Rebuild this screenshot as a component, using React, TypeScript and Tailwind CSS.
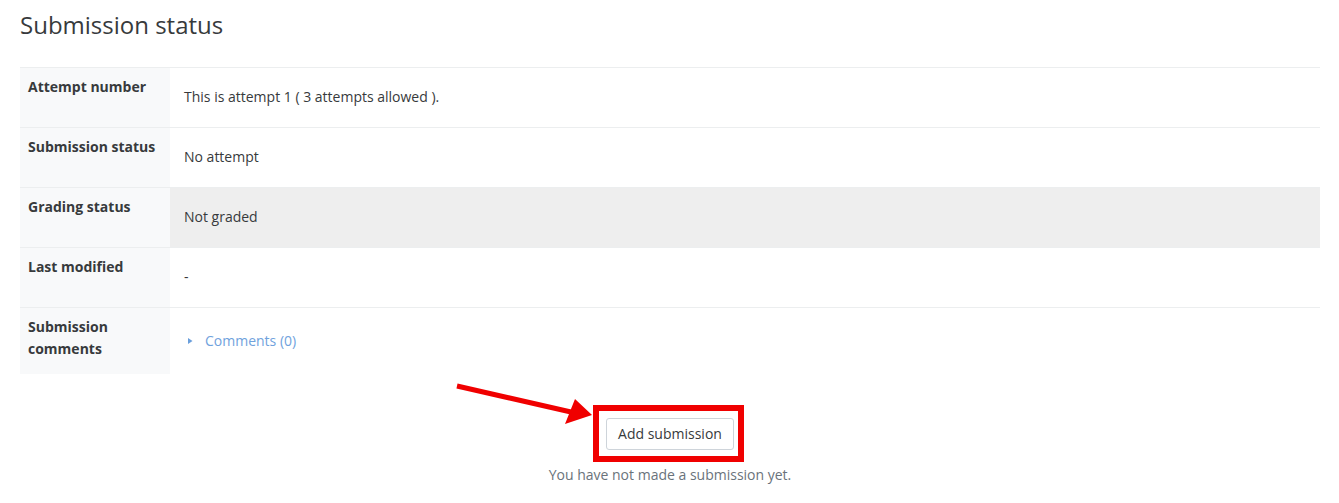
import React from "react";

const rows: { label: React.ReactNode; value: React.ReactNode; shaded?: boolean; tall?: boolean }[] = [
  { label: "Attempt number", value: "This is attempt 1 ( 3 attempts allowed )." },
  { label: "Submission status", value: "No attempt" },
  { label: "Grading status", value: "Not graded", shaded: true },
  { label: "Last modified", value: "-" },
];

export default function App() {
  return (
    <div className="min-h-[503px] bg-white pl-5 pr-[19px] font-['Open_Sans',sans-serif] text-[14px] text-[#373a3c]">
      <h2 className="pt-[10px] text-[24px] leading-[29px] font-normal text-[#373a3c]">Submission status</h2>
      <div className="mt-[28px] grid grid-cols-[150px_1fr]">
        {rows.map((r, i) => (
          <React.Fragment key={i}>
            <div className="border-t border-[#eceeef] bg-[#f8f9fa] pl-2 pr-2 pt-[8px] pb-[14px] font-bold leading-[22px] text-[#373a3c]">
              {r.label}
            </div>
            <div
              className={
                "flex min-h-[60px] items-center border-t border-[#eceeef] pl-[14px] pb-[2px] leading-[22px] " +
                (r.shaded ? "bg-[#eeeeee]" : "bg-white")
              }
            >
              {r.value}
            </div>
          </React.Fragment>
        ))}
        <div className="border-t border-[#eceeef] bg-[#f8f9fa] pl-2 pr-2 pt-[8px] pb-[14px] font-bold leading-[22px] text-[#373a3c]">
          Submission
          <br />
          comments
        </div>
        <div className="flex items-center border-t border-[#eceeef] pl-[18px] leading-[22px]">
          <svg width="5" height="8" viewBox="0 0 5 8" className="mr-[12px]">
            <path d="M0 1 L4.5 4 L0 7 Z" fill="#6a9fdc" />
          </svg>
          <span className="text-[#70a2dd]">Comments (0)</span>
        </div>
      </div>

      <div className="mt-[44px] flex flex-col items-center">
        <div className="relative">
          <button className="h-[32px] w-[128px] rounded-[3px] border border-[#ced4da] bg-white text-[14px] leading-[20px] text-[#373a3c]">
            Add submission
          </button>
          <div className="pointer-events-none absolute left-[-13px] top-[-13px] h-[57px] w-[151px] border-[6px] border-[#f00000]" />
          <svg
            className="pointer-events-none absolute left-[-152px] top-[-36px]"
            width="142"
            height="46"
            viewBox="0 0 142 46"
          >
            <line x1="3" y1="4" x2="117" y2="30" stroke="#f00000" strokeWidth="5" />
            <polygon points="121,17 111,42 138,33" fill="#f00000" />
          </svg>
        </div>
        <p className="mt-[14px] leading-[22px] text-[#6a737b]">You have not made a submission yet.</p>
      </div>
    </div>
  );
}
